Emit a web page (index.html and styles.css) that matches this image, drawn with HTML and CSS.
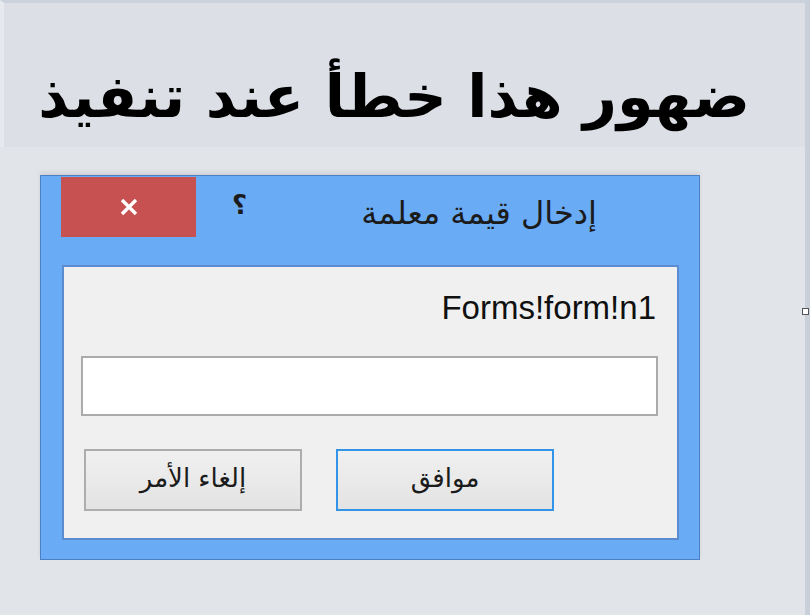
FILE: index.html
```html
<!DOCTYPE html>
<html lang="ar">
<head>
    <meta charset="UTF-8">
    <meta name="viewport" content="width=device-width, initial-scale=1.0">
    <title>إدخال قيمة معلمة</title>
    <link rel="stylesheet" href="styles.css">
</head>
<body>
    <div class="screen">
        <div class="banner">
            <h1 class="headline">ضهور هذا خطأ عند تنفيذ</h1>
        </div>
        <div class="workspace">
            <div class="dialog">
                <div class="titlebar">
                    <button class="close-btn" aria-label="إغلاق">
                        <svg width="22" height="20" viewBox="0 0 22 20">
                            <path d="M4 3 L18 17 M18 3 L4 17" stroke="#fff" stroke-width="3.4" fill="none"/>
                        </svg>
                    </button>
                    <span class="help">؟</span>
                    <span class="dialog-title">إدخال قيمة معلمة</span>
                </div>
                <div class="panel">
                    <p class="param-name">Forms!form!n1</p>
                    <input type="text" class="param-input">
                    <div class="actions">
                        <button class="btn">إلغاء الأمر</button>
                        <button class="btn btn-default">موافق</button>
                    </div>
                </div>
            </div>
            <span class="grip"></span>
        </div>
    </div>
</body>
</html>
```

FILE: styles.css
```css
body {
    margin: 0;
    background-color: #e1e4e9;
    font-family: "DejaVu Sans", sans-serif;
}
.screen {
    width: 805px;
    height: 615px;
    border-right: 5px solid #c9d0da;
    box-sizing: content-box;
}
.banner {
    height: 144px;
    background-color: #dce0e6;
    border-top: 3px solid #cbd2dc;
    border-left: 4px solid #e6e9ee;
    box-sizing: content-box;
}
.headline {
    margin: 0;
    padding: 58px 55px 0 0;
    text-align: right;
    direction: rtl;
    font-size: 59px;
    font-weight: bold;
    line-height: 72px;
    color: #000;
}
.workspace {
    position: relative;
    padding: 28px 0 0 40px;
}
.dialog {
    width: 658px;
    height: 383px;
    background-color: #6aabf6;
    border: 1px solid #4c7fc4;
    box-shadow: 0 -3px 4px rgba(0, 0, 0, 0.08);
    display: flex;
    flex-direction: column;
}
.titlebar {
    height: 89px;
    display: flex;
    align-items: flex-start;
}
.close-btn {
    margin: 1px 0 0 20px;
    width: 135px;
    height: 60px;
    border: none;
    background-color: #c75050;
    display: flex;
    align-items: center;
    justify-content: center;
    padding: 0;
}
.help {
    margin: 14px 0 0 36px;
    font-size: 26px;
    font-weight: bold;
    color: #1b1b1b;
}
.dialog-title {
    margin: 18px 102px 0 auto;
    direction: rtl;
    font-size: 32px;
    color: #1b1b1b;
}
.panel {
    margin: 0 20px 0 21px;
    height: 271px;
    background-color: #f0f0f0;
    border: 2px solid #5b8ccf;
    padding: 0 19px 0 17px;
}
.param-name {
    margin: 23px 2px 0 0;
    text-align: right;
    font-family: "Liberation Sans", Arial, sans-serif;
    font-size: 33px;
    line-height: 36px;
    color: #101010;
}
.param-input {
    display: block;
    margin-top: 30px;
    width: 100%;
    height: 60px;
    box-sizing: border-box;
    border: 2px solid #ababab;
    background: #fff;
}
.actions {
    margin-top: 33px;
    display: flex;
    gap: 34px;
    padding-left: 3px;
}
.btn {
    width: 218px;
    height: 62px;
    border: 2px solid #adadad;
    background: linear-gradient(#f0f0f0, #e3e3e3);
    font-family: "DejaVu Sans", sans-serif;
    font-size: 26px;
    color: #1b1b1b;
    direction: rtl;
    padding: 0 0 4px;
}
.btn-default {
    border-color: #3393e6;
}
.grip {
    position: absolute;
    right: -4px;
    top: 161px;
    width: 5px;
    height: 5px;
    border: 1px solid #555;
    background: #fff;
}
```
